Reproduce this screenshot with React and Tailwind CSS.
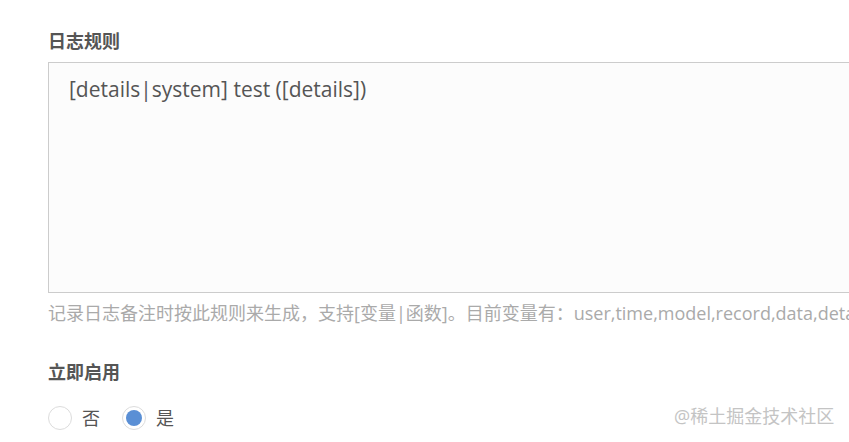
import React from 'react';

const Radio = ({ label, checked }) => (
  <label className="flex items-center gap-[10px] cursor-pointer">
    <span className="w-[24px] h-[24px] rounded-full border border-[#dcdcdc] bg-white flex items-center justify-center">
      {checked && <span className="w-[16px] h-[16px] rounded-full bg-[#5a8fd5]" />}
    </span>
    <span className="text-[18px] leading-6 text-[#555]">{label}</span>
  </label>
);

export default function App() {
  return (
    <div
      className="relative w-[849px] h-[442px] overflow-hidden bg-white pl-12 pt-[29px]"
      style={{ fontFamily: '"Open Sans", "Noto Sans CJK SC", sans-serif' }}
    >
      <div className="text-[18px] leading-6 font-bold text-[#555]">日志规则</div>
      <div className="mt-[9px] w-[900px] h-[231px] border border-[#cccccc] bg-[#fcfcfc] px-5 pt-[12px] text-[21px] leading-7 text-[#555]">
        [details|system] test ([details])
      </div>
      <div className="mt-[8px] whitespace-nowrap text-[18px] leading-6 text-[#aaa]">
        记录日志备注时按此规则来生成，支持[变量|函数]。目前变量有：user,time,model,record,data,details
      </div>
      <div className="mt-[35px] text-[18px] leading-6 font-bold text-[#555]">立即启用</div>
      <div className="mt-[22px] flex items-center gap-[22px]">
        <Radio label="否" />
        <Radio label="是" checked />
      </div>
      <div className="absolute left-[674px] top-[404px] text-[18px] leading-6 text-[#c4c4c4] whitespace-nowrap">
        @稀土掘金技术社区
      </div>
    </div>
  );
}
